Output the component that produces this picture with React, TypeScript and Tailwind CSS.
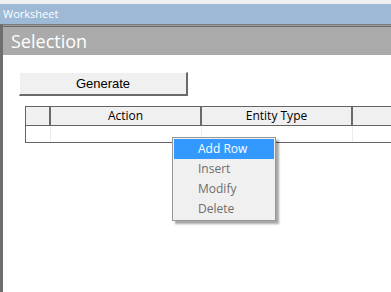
export default function App() {
    const menuItems = ['Add Row', 'Insert', 'Modify', 'Delete'];

    return (
        <div className="relative w-[391px] h-[292px] overflow-hidden bg-white flex flex-col font-['Open_Sans',sans-serif]">
            {/* Window top strip */}
            <div className="h-[4px] bg-[#f0f0f0]"></div>

            {/* Title bar */}
            <div className="h-[20px] bg-[#9db9d6] pl-[3px] text-[11px] leading-[20px] text-white">Worksheet</div>

            {/* Body */}
            <div className="flex-1 flex flex-col border-l-[3px] border-[#6e6e6e]">
                {/* Section header */}
                <div className="border-t border-[#7c7c7c]"></div>
                <div className="border-t border-[#9c9c9c]"></div>
                <div className="border-t border-[#6a6a6a]"></div>
                <div className="h-[28px] bg-[#aaaaaa] pl-[8px] text-[18px] leading-[28px] text-white">Selection</div>

                {/* Content */}
                <div className="flex-1 flex flex-col pt-[15px]">
                    <div className="pl-[16px]">
                        <button className="w-[169px] h-[24px] bg-[#f0f0f0] border-t border-l border-t-white border-l-white border-b-[2px] border-r-[2px] border-b-[#6a6a6a] border-r-[#6a6a6a] text-[13px] text-black font-['Liberation_Sans',sans-serif]">
                            Generate
                        </button>
                    </div>

                    {/* Grid */}
                    <div className="ml-[22px] mt-[10px] w-[400px] border border-r-0 border-[#646464]">
                        <div className="flex h-[19px] bg-[#f0f0f0] border-b border-[#646464] text-[12px] leading-[18px] text-black">
                            <div className="w-[25px] border-r-[2px] border-[#6a6a6a]"></div>
                            <div className="w-[151px] border-r-[2px] border-[#6a6a6a] text-center">Action</div>
                            <div className="w-[151px] border-r-[2px] border-[#6a6a6a] text-center">Entity Type</div>
                            <div className="flex-1"></div>
                        </div>
                        <div className="flex h-[16px]">
                            <div className="w-[25px] border-r border-[#ececec]"></div>
                            <div className="w-[151px] border-r border-[#ececec]"></div>
                            <div className="w-[151px] border-r border-[#ececec]"></div>
                            <div className="flex-1"></div>
                        </div>
                    </div>
                </div>
            </div>

            {/* Context menu */}
            <div className="absolute left-[172px] top-[137px] w-[104px] bg-[#f0f0f0] border border-[#979797] p-[1px] shadow-[3px_3px_2px_rgba(0,0,0,0.35)]">
                {menuItems.map((item, i) => (
                    <div
                        key={item}
                        className={
                            i === 0
                                ? 'h-[20px] bg-[#3399ff] pl-[24px] text-[12px] leading-[20px] text-white'
                                : 'h-[20px] pl-[24px] text-[12px] leading-[20px] text-[#6d6d6d]'
                        }
                    >
                        {item}
                    </div>
                ))}
            </div>
        </div>
    );
}
